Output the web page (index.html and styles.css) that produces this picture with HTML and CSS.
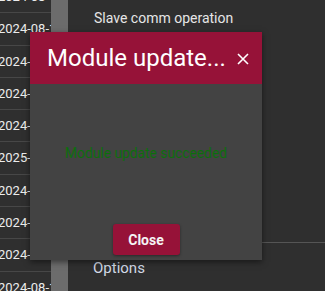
FILE: index.html
```html
<!DOCTYPE html>
<html lang="en">
<head>
  <meta charset="UTF-8" />
  <title>Module update</title>
  <link rel="stylesheet" href="styles.css">
</head>
<body>

  <div class="page">
    <!-- history list -->
    <div class="history">
      <div class="row">2024-08-15</div>
      <div class="row">2024-08-14</div>
      <div class="row">2024-08-14</div>
      <div class="row">2024-08-13</div>
      <div class="row">2024-08-12</div>
      <div class="row">2025-01-10</div>
      <div class="row">2024-08-12</div>
      <div class="row">2024-08-11</div>
      <div class="row">2024-08-10</div>
      <div class="row">2024-08-10</div>
    </div>
    <div class="scrollbar"></div>

    <div class="main">
      <div class="item">Slave comm operation</div>
      <div class="spacer"></div>
      <div class="divider"></div>
      <div class="item options">Options</div>
    </div>
  </div>

  <!-- Dialog -->
  <div class="dialog">
    <div class="dialog-header">
      <span class="dialog-title">Module update...</span>
      <svg class="dialog-close" width="12" height="12" viewBox="0 0 12 12">
        <path d="M1 1 L11 11 M11 1 L1 11" stroke="#fff" stroke-width="1.6" fill="none"/>
      </svg>
    </div>
    <div class="dialog-body">
      <p class="success">Module update succeeded</p>
      <button class="btn">Close</button>
    </div>
  </div>

</body>
</html>
```

FILE: styles.css
```css
* {
  margin: 0;
  padding: 0;
  box-sizing: border-box;
}

body {
  background-color: #2f2f2f;
  font-family: Roboto, "Liberation Sans", sans-serif;
  width: 325px;
  height: 291px;
  overflow: hidden;
}

.page {
  display: flex;
  height: 291px;
}

/* left list */
.history {
  width: 51px;
  overflow: hidden;
  margin-top: -19px;
}

.row {
  height: 32.3px;
  line-height: 32px;
  margin-left: -2px;
  white-space: nowrap;
  color: #ececec;
  font-size: 13px;
  border-bottom: 1px solid #474747;
}

.scrollbar {
  width: 17px;
  background-color: #6c6c6c;
}

/* right content */
.main {
  flex: 1;
  display: flex;
  flex-direction: column;
  padding: 9px 0 0 26px;
}

.item {
  color: #e6e6e6;
  font-size: 14px;
  line-height: 18px;
}

.spacer {
  flex: 1;
}

.divider {
  height: 1px;
  background-color: #555;
  margin: 0 0 16px -26px;
}

.options {
  font-size: 15px;
  color: #d2d9e6;
  margin-bottom: 14px;
  margin-left: -1px;
}

/* dialog overlay */
.dialog {
  position: absolute;
  left: 30px;
  top: 32px;
  width: 232px;
  height: 228px;
  background-color: #434343;
  box-shadow: 0 2px 6px rgba(0,0,0,0.5);
  display: flex;
  flex-direction: column;
}

.dialog-header {
  height: 52px;
  background-color: #961238;
  display: flex;
  align-items: center;
  justify-content: space-between;
  padding: 0 13px 0 17px;
  color: white;
}

.dialog-title {
  font-size: 24px;
}

.dialog-close {
  margin-top: 2px;
}

.dialog-body {
  flex: 1;
  display: flex;
  flex-direction: column;
  align-items: center;
}

.success {
  color: #0d6e0d;
  font-size: 13.8px;
  margin-top: 61px;
}

.btn {
  margin-top: auto;
  margin-bottom: 5px;
  width: 67px;
  height: 31px;
  background-color: #961238;
  color: #f4f4f4;
  border: none;
  border-radius: 3px;
  font-family: Roboto, "Liberation Sans", sans-serif;
  font-weight: bold;
  font-size: 14px;
  box-shadow: 0 1px 3px rgba(0,0,0,0.4);
}
```
